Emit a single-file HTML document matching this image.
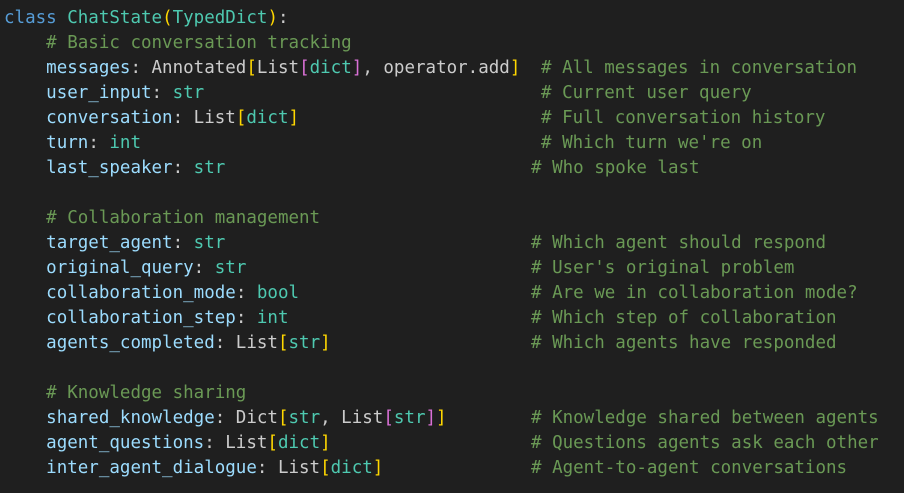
<!DOCTYPE html>
<html><head><meta charset="utf-8"><style>
html,body{margin:0;padding:0;background:#1f1f1f;width:904px;height:493px;overflow:hidden}
.c{position:absolute;left:4px;top:6px;font-family:"DejaVu Sans Mono","Liberation Mono",monospace;font-size:17.5px;line-height:25px;color:#cccccc}
.l{position:relative;height:25px;white-space:pre}
.k{color:#569cd6}.t{color:#4ec9b0}.m{color:#6a9955}.v{color:#9cdcfe}.y{color:#ffd700}.p{color:#da70d6}
.r{position:absolute;top:0}
.a{left:537px}.b{left:527px}
</style></head><body><div class="c">
<div class="l"><span class="k">class</span> <span class="t">ChatState</span><span class="y">(</span><span class="t">TypedDict</span><span class="y">)</span>:</div>
<div class="l">    <span class="m"># Basic conversation tracking</span></div>
<div class="l">    <span class="v">messages</span>: Annotated<span class="y">[</span>List<span class="p">[</span><span class="t">dict</span><span class="p">]</span>, operator.add<span class="y">]</span><span class="r a m"># All messages in conversation</span></div>
<div class="l">    <span class="v">user_input</span>: <span class="t">str</span><span class="r a m"># Current user query</span></div>
<div class="l">    <span class="v">conversation</span>: List<span class="y">[</span><span class="t">dict</span><span class="y">]</span><span class="r a m"># Full conversation history</span></div>
<div class="l">    <span class="v">turn</span>: <span class="t">int</span><span class="r a m"># Which turn we're on</span></div>
<div class="l">    <span class="v">last_speaker</span>: <span class="t">str</span><span class="r b m"># Who spoke last</span></div>
<div class="l"> </div>
<div class="l">    <span class="m"># Collaboration management</span></div>
<div class="l">    <span class="v">target_agent</span>: <span class="t">str</span><span class="r b m"># Which agent should respond</span></div>
<div class="l">    <span class="v">original_query</span>: <span class="t">str</span><span class="r b m"># User's original problem</span></div>
<div class="l">    <span class="v">collaboration_mode</span>: <span class="t">bool</span><span class="r b m"># Are we in collaboration mode?</span></div>
<div class="l">    <span class="v">collaboration_step</span>: <span class="t">int</span><span class="r b m"># Which step of collaboration</span></div>
<div class="l">    <span class="v">agents_completed</span>: List<span class="y">[</span><span class="t">str</span><span class="y">]</span><span class="r b m"># Which agents have responded</span></div>
<div class="l"> </div>
<div class="l">    <span class="m"># Knowledge sharing</span></div>
<div class="l">    <span class="v">shared_knowledge</span>: Dict<span class="y">[</span><span class="t">str</span>, List<span class="p">[</span><span class="t">str</span><span class="p">]</span><span class="y">]</span><span class="r b m"># Knowledge shared between agents</span></div>
<div class="l">    <span class="v">agent_questions</span>: List<span class="y">[</span><span class="t">dict</span><span class="y">]</span><span class="r b m"># Questions agents ask each other</span></div>
<div class="l">    <span class="v">inter_agent_dialogue</span>: List<span class="y">[</span><span class="t">dict</span><span class="y">]</span><span class="r b m"># Agent-to-agent conversations</span></div>
</div></body></html>
